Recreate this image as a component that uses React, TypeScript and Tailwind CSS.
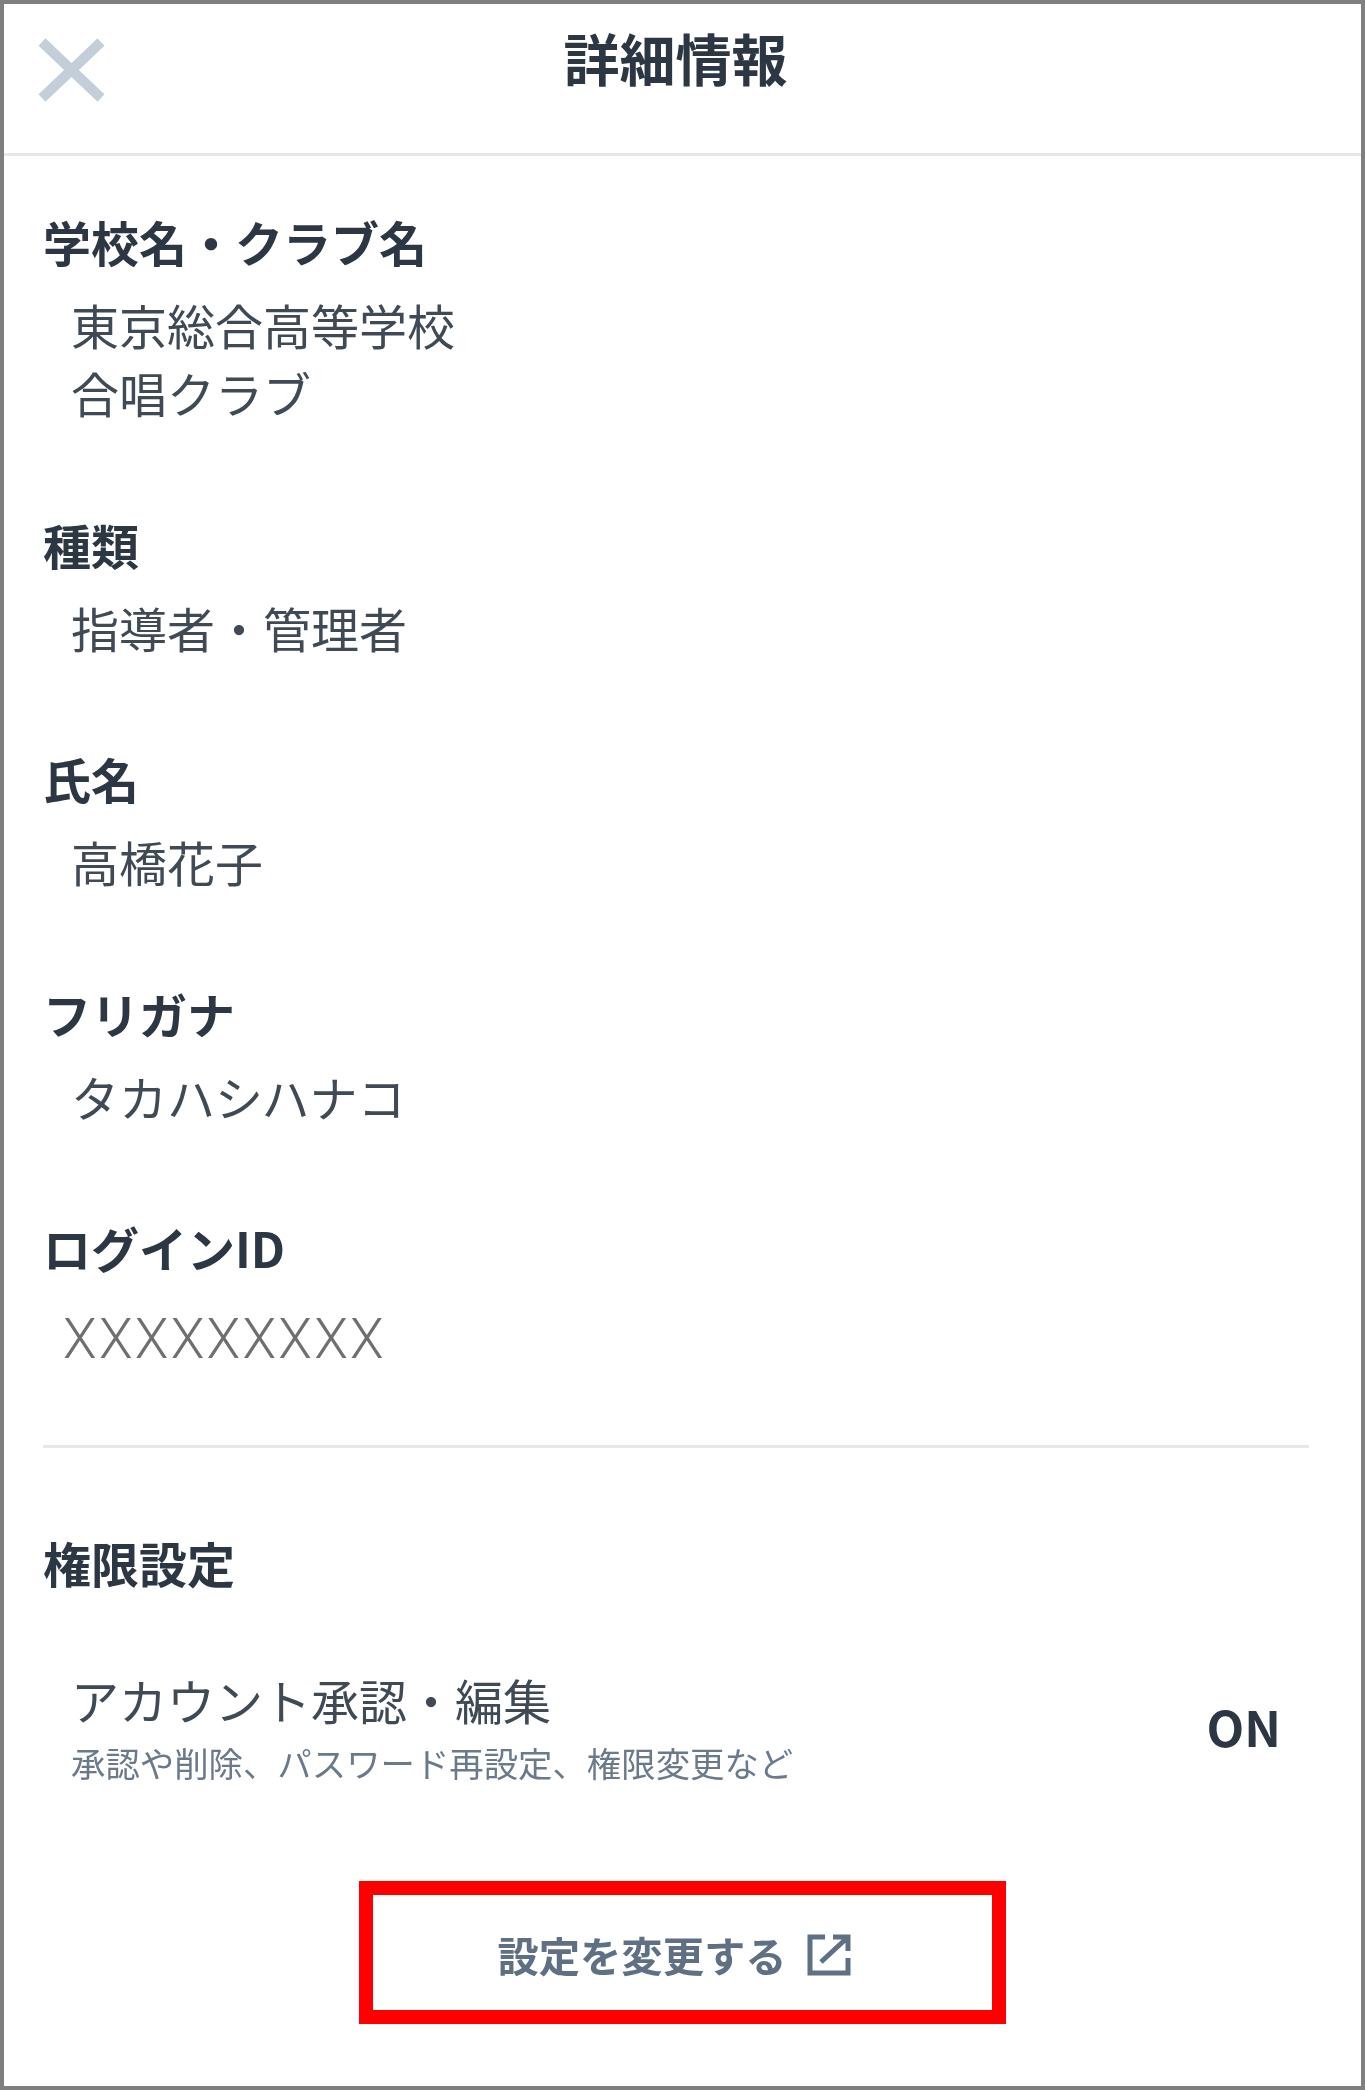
const fields = [
  { label: '学校名・クラブ名', lines: ['東京総合高等学校', '合唱クラブ'] },
  { label: '種類', lines: ['指導者・管理者'] },
  { label: '氏名', lines: ['高橋花子'] },
  { label: 'フリガナ', lines: ['タカハシハナコ'] },
];

export default function App() {
  return (
    <div className="h-[2090px] w-[1365px] border-[4px] border-[#7f7f7f] bg-white font-['Noto_Sans_CJK_JP',sans-serif] text-[#2d3743]">
      {/* header */}
      <div className="relative flex h-[152px] items-center justify-center border-b-[3px] border-[#e6e9ec]">
        <svg className="absolute left-[34px] top-[34px] h-[64px] w-[67px] blur-[0.5px]" viewBox="0 0 67 64" fill="none" stroke="#c3ced8" strokeWidth="10">
          <path d="M4 4 63 60M63 4 4 60" />
        </svg>
        <h1 className="mb-[44px] mr-[14px] text-[56px] leading-[68px] font-bold blur-[0.6px]">詳細情報</h1>
      </div>

      <div className="px-[39px] pt-[51px]">
        {fields.map((f) => (
          <div key={f.label} className="mb-[83.5px]">
            <p className="text-[48px] leading-[68px] font-bold blur-[0.6px]">{f.label}</p>
            <div className="mt-[15px] pl-[28px] text-[48px] leading-[68px] text-[#3f4a55] blur-[0.6px]">
              {f.lines.map((l) => (
                <p key={l}>{l}</p>
              ))}
            </div>
          </div>
        ))}

        <p className="text-[48px] leading-[68px] font-bold blur-[0.6px]">ログインID</p>
        <p className="mt-[24px] pl-[20px] font-['Roboto',sans-serif] text-[55px] leading-[68px] font-light tracking-[2.2px] text-[#6f6f6f] blur-[0.4px]">XXXXXXXXX</p>

        <hr className="mr-[13px] mt-[72px] border-t-[3px] border-[#e6e9ec]" />

        <p className="mt-[80px] text-[48px] leading-[68px] font-bold blur-[0.6px]">権限設定</p>

        {/* permission row */}
        <div className="mt-[69px] flex items-center justify-between pl-[28px] pr-[41px]">
          <div>
            <p className="text-[48px] leading-[68px] text-[#3f4a55] blur-[0.6px]">アカウント承認・編集</p>
            <p className="mt-[4px] text-[34.4px] leading-[50px] text-[#6b7a8a] blur-[0.6px]">承認や削除、パスワード再設定、権限変更など</p>
          </div>
          <span className="text-[49px] font-bold blur-[0.6px]">ON</span>
        </div>

        <div className="mt-[94px] flex justify-center">
          <button className="flex h-[143px] w-[647px] items-center justify-center gap-[20px] border-[14px] border-[#ff0000] pr-[17px] pt-[4px] text-[#5f7084]">
            <span className="text-[41.3px] font-bold blur-[0.6px]">設定を変更する</span>
            <svg className="h-[42px] w-[44px] blur-[0.5px]" viewBox="0 0 44 42" fill="none" stroke="currentColor" strokeWidth="5">
              <path d="M18 3H3V39H41V24" />
              <path d="M14 28 40 4M26 3H41V17" />
            </svg>
          </button>
        </div>
      </div>
    </div>
  );
}
